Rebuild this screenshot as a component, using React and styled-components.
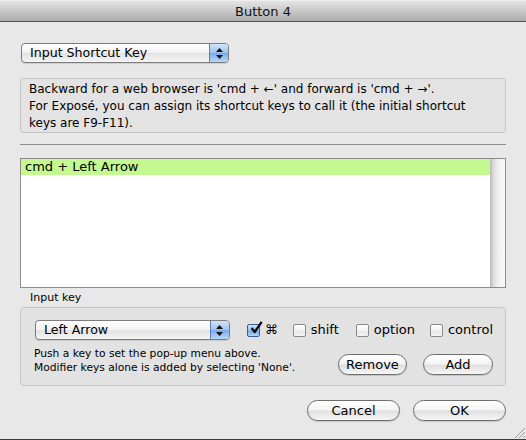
import React from "react";
import styled, { createGlobalStyle } from "styled-components";

const GlobalStyle = createGlobalStyle`
  html, body {
    margin: 0;
    padding: 0;
    background: #e8e8e8;
  }
  body {
    font-family: "DejaVu Sans", "Liberation Sans", sans-serif;
    color: #000;
  }
`;

const App = () => {
  return (
    <>
      <GlobalStyle />
      <Window>
        <TitleBar>Button 4</TitleBar>
        <Content>
          <Popup width={208}>Input Shortcut Key</Popup>
          <Description>
            Backward for a web browser is 'cmd + ←' and forward is 'cmd + →'.
            <br />
            For Exposé, you can assign its shortcut keys to call it (the initial
            shortcut
            <br />
            keys are F9-F11).
          </Description>
          <Separator />
          <List>
            <Rows>
              <Row selected>cmd + Left Arrow</Row>
            </Rows>
            <ScrollTrack />
          </List>
          <GroupLabel>Input key</GroupLabel>
          <Group>
            <GroupTop>
              <Popup width={198}>Left Arrow</Popup>
              <Modifiers>
                <Check checked label="⌘" />
                <Check label="shift" />
                <Check label="option" />
                <Check label="control" />
              </Modifiers>
            </GroupTop>
            <GroupBottom>
              <Hint>
                Push a key to set the pop-up menu above.
                <br />
                Modifier keys alone is added by selecting 'None'.
              </Hint>
              <ButtonRow>
                <PillButton width={69}>Remove</PillButton>
                <PillButton width={70}>Add</PillButton>
              </ButtonRow>
            </GroupBottom>
          </Group>
          <Footer>
            <PillButton width={93}>Cancel</PillButton>
            <PillButton width={93}>OK</PillButton>
          </Footer>
        </Content>
        <Grip viewBox="0 0 12 12">
          <line x1="2" y1="12" x2="12" y2="2" stroke="#999" />
          <line x1="6" y1="12" x2="12" y2="6" stroke="#999" />
          <line x1="10" y1="12" x2="12" y2="10" stroke="#999" />
        </Grip>
      </Window>
    </>
  );
};

export default App;

const Popup = ({ width, children }) => (
  <PopupBox width={width}>
    <PopupText>{children}</PopupText>
    <PopupArrows>
      <svg width="7" height="11" viewBox="0 0 7 11">
        <path d="M3.5 0 L7 4 L0 4 Z" fill="#111" />
        <path d="M3.5 11 L7 7 L0 7 Z" fill="#111" />
      </svg>
    </PopupArrows>
  </PopupBox>
);

const Check = ({ checked, label }) => (
  <CheckItem>
    <CheckBox checked={checked}>
      {checked && (
        <CheckMark viewBox="0 0 16 16">
          <path
            d="M3 7.5 L6.5 12 L14.5 0.5"
            fill="none"
            stroke="#0a0a0a"
            strokeWidth="2.6"
            strokeLinejoin="round"
          />
        </CheckMark>
      )}
    </CheckBox>
    <span>{label}</span>
  </CheckItem>
);

const Window = styled.div`
  position: relative;
  width: 526px;
  height: 440px;
  box-sizing: border-box;
  background: #e8e8e8;
  border-bottom: 1px solid #3c3c3c;
  display: flex;
  flex-direction: column;
  overflow: hidden;
`;

const TitleBar = styled.div`
  height: 22px;
  box-sizing: border-box;
  border-bottom: 1px solid #555;
  border-top: 1px solid #eee;
  background: linear-gradient(#e4e4e4, #c8c8c8 50%, #adadad);
  font-size: 13px;
  line-height: 21px;
  text-align: center;
  color: #111;
`;

const Content = styled.div`
  display: flex;
  flex-direction: column;
  padding: 21px 20px 0 20px;
`;

const PopupBox = styled.div`
  width: ${(p) => p.width}px;
  height: 20px;
  margin-left: 1px;
  box-sizing: border-box;
  display: flex;
  border: 1px solid #7d7d7d;
  border-radius: 4px;
  background: linear-gradient(#ffffff, #f2f2f2 50%, #e2e2e2 51%, #f4f4f4);
  box-shadow: 0 1px 1px rgba(0, 0, 0, 0.12);
  overflow: hidden;
`;

const PopupText = styled.div`
  flex: 1;
  font-size: 12.6px;
  line-height: 18px;
  padding-left: 8px;
  white-space: nowrap;
`;

const PopupArrows = styled.div`
  width: 18px;
  display: flex;
  align-items: center;
  justify-content: center;
  border-left: 1px solid #5a7fb8;
  background: linear-gradient(#d3e4f8, #9cc2ee 50%, #79aae6 51%, #b6d8fb);
`;

const Description = styled.div`
  margin-top: 15px;
  height: 55px;
  box-sizing: border-box;
  border: 1px solid #c6c6c6;
  border-radius: 3px;
  background: #e3e3e3;
  padding: 2px 8px;
  font-size: 12px;
  line-height: 17px;
  white-space: nowrap;
`;

const Separator = styled.div`
  margin-top: 11px;
  height: 1px;
  background: #8e8e8e;
`;

const List = styled.div`
  margin-top: 13px;
  height: 130px;
  box-sizing: border-box;
  border: 1px solid #8c8c8c;
  background: #fff;
  display: flex;
`;

const Rows = styled.div`
  flex: 1;
`;

const Row = styled.div`
  height: 16px;
  line-height: 16px;
  font-size: 13px;
  padding-left: 4px;
  background: ${(p) => (p.selected ? "#c4f890" : "transparent")};
`;

const ScrollTrack = styled.div`
  width: 15px;
  background: linear-gradient(to right, #b8b8b8, #dedede 25%, #f2f2f2 60%, #fafafa);
`;

const GroupLabel = styled.div`
  margin-top: 4px;
  padding-left: 10px;
  font-size: 11px;
  line-height: 12px;
`;

const Group = styled.div`
  margin-top: 3px;
  height: 79px;
  box-sizing: border-box;
  border: 1px solid #c4c4c4;
  border-radius: 4px;
  background: #e2e2e2;
  padding: 12px 12px 0 13px;
`;

const GroupTop = styled.div`
  display: flex;
  align-items: center;
`;

const Modifiers = styled.div`
  display: flex;
  align-items: center;
  margin-left: 17px;
  gap: 13px;
`;

const CheckItem = styled.label`
  display: flex;
  align-items: center;
  gap: 5px;
  font-size: 13px;
  line-height: 16px;
  &:nth-child(2) { margin-left: 2px; }
  &:nth-child(3) { margin-left: 4px; }
  &:nth-child(4) { margin-left: 2px; }
`;

const CheckBox = styled.span`
  position: relative;
  width: 13px;
  height: 13px;
  box-sizing: border-box;
  border: 1px solid ${(p) => (p.checked ? "#3a5e9c" : "#8a8a8a")};
  border-radius: 2px;
  background: ${(p) =>
    p.checked
      ? "linear-gradient(#d0e3fa, #8fbaf0 50%, #6fa4e8 51%, #b3d6fb)"
      : "linear-gradient(#ffffff, #f2f2f2 50%, #e4e4e4 51%, #f6f6f6)"};
`;

const CheckMark = styled.svg`
  position: absolute;
  left: 1px;
  top: -4px;
  width: 14px;
  height: 15px;
`;

const GroupBottom = styled.div`
  display: flex;
  align-items: flex-end;
  justify-content: space-between;
  margin-top: 7px;
`;

const Hint = styled.div`
  font-size: 10.7px;
  line-height: 14px;
  white-space: nowrap;
`;

const ButtonRow = styled.div`
  display: flex;
  gap: 16px;
`;

const PillButton = styled.button`
  width: ${(p) => p.width}px;
  height: 21px;
  padding: 0;
  border: 1px solid #6e6e6e;
  border-radius: 11px;
  background: linear-gradient(#ffffff, #f4f4f4 45%, #e0e0e0 55%, #f6f6f6);
  box-shadow: 0 1px 1px rgba(0, 0, 0, 0.15);
  font-family: inherit;
  font-size: 13px;
  line-height: 19px;
  color: #000;
`;

const Footer = styled.div`
  display: flex;
  justify-content: flex-end;
  gap: 13px;
  margin-top: 14px;
`;

const Grip = styled.svg`
  position: absolute;
  right: 1px;
  bottom: 1px;
  width: 12px;
  height: 12px;
`;
